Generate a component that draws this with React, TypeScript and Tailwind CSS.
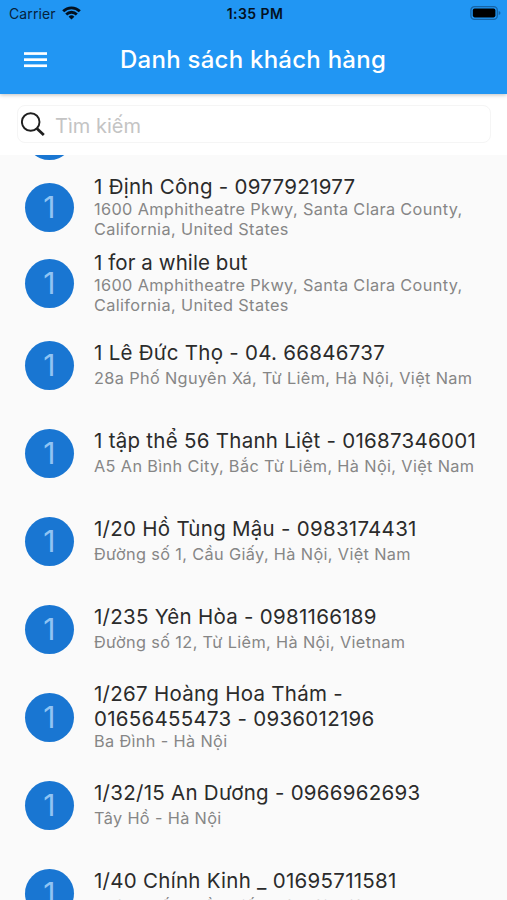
type Customer = {
  name: string;
  address: string;
  rowClass?: string;
  nameClass?: string;
};

const CUSTOMERS: Customer[] = [
  {
    name: '1 Định Công - 0977921977',
    address: '1600 Amphitheatre Pkwy, Santa Clara County, California, United States',
    rowClass: 'h-[75.8px]',
    nameClass: 'leading-[24px]',
  },
  {
    name: '1 for a while but',
    address: '1600 Amphitheatre Pkwy, Santa Clara County, California, United States',
    rowClass: 'h-[75.8px]',
    nameClass: 'leading-[24px] tracking-[0.08px]',
  },
  { name: '1 Lê Đức Thọ - 04. 66846737', address: '28a Phố Nguyên Xá, Từ Liêm, Hà Nội, Việt Nam' },
  { name: '1 tập thể 56 Thanh Liệt - 01687346001', address: 'A5 An Bình City, Bắc Từ Liêm, Hà Nội, Việt Nam' },
  { name: '1/20 Hồ Tùng Mậu - 0983174431', address: 'Đường số 1, Cầu Giấy, Hà Nội, Việt Nam' },
  { name: '1/235 Yên Hòa - 0981166189', address: 'Đường số 12, Từ Liêm, Hà Nội, Vietnam' },
  {
    name: '1/267 Hoàng Hoa Thám - 01656455473 - 0936012196',
    address: 'Ba Đình - Hà Nội',
    nameClass: 'pr-4 leading-[24.5px]',
  },
  { name: '1/32/15 An Dương - 0966962693', address: 'Tây Hồ - Hà Nội' },
  { name: '1/40 Chính Kinh _ 01695711581', address: 'Đường số 1, Cầu Giấy, Hà Nội, Việt Nam' },
];

function StatusBar() {
  return (
    <div className="grid h-[27px] grid-cols-3 items-center pl-[9px] pr-[6px] text-[14px] text-[#06223c]">
      <div className="flex items-center gap-[6px]">
        <span className="tracking-[0.1px]">Carrier</span>
        <svg className="-mt-0.5" width="19" height="14" viewBox="0 0 19 14" fill="none" stroke="#03111f" strokeWidth="2.8">
          <path d="M1.2 5.2A11.8 11.8 0 0 1 17.8 5.2" />
          <path d="M4.2 8.4A7.6 7.6 0 0 1 14.8 8.4" />
          <path d="M9.5 13.6 6.6 10.7A4.1 4.1 0 0 1 12.4 10.7Z" fill="#03111f" stroke="none" />
        </svg>
      </div>
      <span className="text-center font-semibold tracking-[0.45px] text-[#03111f]">1:35 PM</span>
      <svg className="-mt-0.5 justify-self-end" width="31" height="14" viewBox="0 0 31 14">
        <rect x="0.9" y="0.7" width="26.4" height="12.6" rx="3.6" fill="none" stroke="#1664a6" strokeWidth="1.3" />
        <rect x="2.8" y="2.6" width="22.6" height="8.8" rx="1.8" fill="#000" />
        <path d="M28.7 5q1.8.6 1.8 2t-1.8 2z" fill="#1664a6" />
      </svg>
    </div>
  );
}

function Header() {
  return (
    <header className="relative z-10 h-[94px] bg-[#2196f3] shadow-[0_1px_4px_rgba(0,0,0,0.25)]">
      <StatusBar />
      <div className="flex h-[66px] items-center pl-6">
        <svg width="23" height="16" viewBox="0 0 23 16" fill="#fff">
          <rect width="23" height="2.7" y="0.2" />
          <rect width="23" height="2.7" y="6.3" />
          <rect width="23" height="2.7" y="12.4" />
        </svg>
        <h1 className="ml-[73px] text-[24px] font-medium tracking-[0.25px] text-white">Danh sách khách hàng</h1>
      </div>
    </header>
  );
}

function SearchBar() {
  return (
    <div className="h-[61px] bg-white pl-[17px] pr-4 pt-[11px]">
      <div className="flex h-[38px] items-center rounded-[8px] border-[1.5px] border-[#f5f5f5] pl-[3px]">
        <svg width="24" height="25" viewBox="0 0 24 25" fill="none" stroke="#1f1f1f">
          <circle cx="9.7" cy="10" r="8.8" strokeWidth="1.9" />
          <path d="M15.9 16.4 22.8 23" strokeWidth="2.8" />
        </svg>
        <span className="ml-[10px] pt-[3px] text-[20px] text-[#c4c4c4]">Tìm kiếm</span>
      </div>
    </div>
  );
}

function Avatar({ label }: { label: string }) {
  return (
    <div className="flex h-[49px] w-[49px] shrink-0 items-center justify-center rounded-full bg-[#1976d2] pt-px text-[30px] text-[#90c4f3]">
      {label}
    </div>
  );
}

function CustomerRow({ name, address, rowClass = 'h-[88px]', nameClass = '-mt-[3px] leading-[30px]' }: Customer) {
  return (
    <li className={`flex shrink-0 items-center gap-5 pl-[25px] pr-5 tracking-[0.27px] ${rowClass}`}>
      <Avatar label={name[0]} />
      <div className="min-w-0 flex-1">
        <div className={`text-[20.5px] text-[#2b2b2b] ${nameClass}`}>{name}</div>
        <div className="text-[16.3px] leading-[20.6px] tracking-[0.36px] text-[#868686]">{address}</div>
      </div>
    </li>
  );
}

export default function App() {
  return (
    <div className="flex h-[900px] w-[507px] flex-col overflow-hidden bg-[#fafafa] font-['Inter','Liberation_Sans',sans-serif]">
      <Header />
      <SearchBar />
      <ul className="flex min-h-0 flex-1 flex-col overflow-hidden">
        {/* bottom edge of the avatar that is scrolled under the search bar */}
        <li className="flex h-[14.5px] shrink-0 flex-col justify-end overflow-hidden pb-[9.7px] pl-[25px]">
          <div className="h-[49px] w-[49px] shrink-0 rounded-full bg-[#1976d2]" />
        </li>
        {CUSTOMERS.map((customer) => (
          <CustomerRow key={customer.name} {...customer} />
        ))}
      </ul>
    </div>
  );
}
